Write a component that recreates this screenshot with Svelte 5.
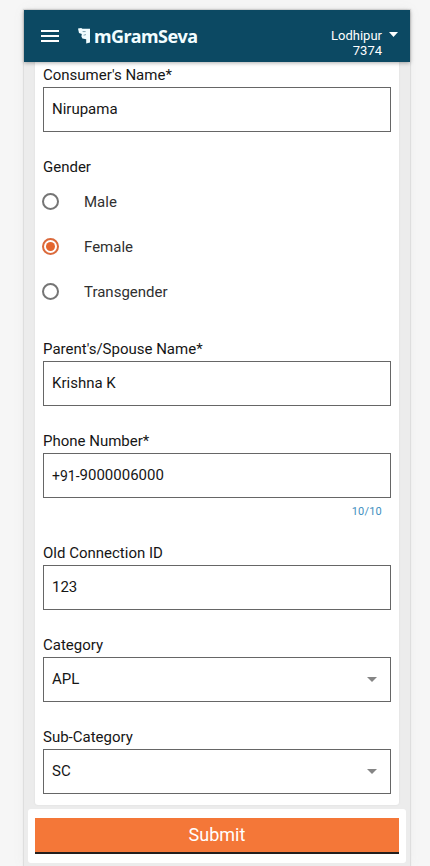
<script>
  let gender = $state('Female');
  const genders = ['Male', 'Female', 'Transgender'];
</script>

{#snippet field(label, value, select = false, prefix = '')}
  <div class="field">
    <div class="label"><span>{label}</span></div>
    <div class="box">
      <span class="value">{#if prefix}<span class="prefix">{prefix}</span>{/if}{value}</span>
      {#if select}
        <svg class="caret" width="10" height="5" viewBox="0 0 10 5"><path d="M0 0h10L5 5z" fill="#858585" /></svg>
      {/if}
    </div>
  </div>
{/snippet}

<div class="screen">
  <div class="phone">
    <header>
      <svg class="menu" width="18" height="12" viewBox="0 0 18 12"><path d="M0 0h18v2H0zM0 5h18v2H0zM0 10h18v2H0z" fill="#fff" /></svg>
      <svg class="mark" width="12" height="16" viewBox="0 0 12 16">
        <path d="M0 .6L3.2 0 4.4 .8H12V14.6L8.2 15.6V11.2L4.4 10.6 3.4 8.4 3.8 6 1 5z" fill="#f2fdff" />
        <path d="M4.6 3.6H7.6M5.6 7.2L8 6.6" stroke="#0c4963" stroke-width=".5" fill="none" />
      </svg>
      <span class="brand">mGramSeva</span>
      <div class="place">
        <span>Lodhipur</span>
        <span>7374</span>
      </div>
      <svg class="place-caret" width="9" height="5" viewBox="0 0 9 5"><path d="M0 0h9L4.5 5z" fill="#fff" /></svg>
    </header>

    <main>
      <div class="card">
        {@render field("Consumer's Name*", 'Nirupama')}
        <div class="gender">
          <div class="label"><span>Gender</span></div>
          {#each genders as g}
            <button class="option" class:on={gender === g} onclick={() => (gender = g)}>
              <span class="radio"></span><span>{g}</span>
            </button>
          {/each}
        </div>
        {@render field("Parent's/Spouse Name*", 'Krishna K')}
        {@render field('Phone Number*', '9000006000', false, '+91-')}
        <div class="counter">10/10</div>
        {@render field('Old Connection ID', '123')}
        {@render field('Category', 'APL', true)}
        {@render field('Sub-Category', 'SC', true)}
      </div>
      <footer><button class="submit">Submit</button></footer>
    </main>
  </div>
</div>

<style>
  :global(body) { margin: 0; background: #f6f6f6; }
  .screen {
    box-sizing: border-box; width: 430px; height: 866px; padding: 10px 20px 0 24px;
    overflow: hidden; background: #f6f6f6;
    font-family: Roboto, sans-serif; font-size: 15px; color: #161616;
  }
  .phone {
    width: 386px; height: 856px; background: #ececec;
    box-shadow: 0 0 1px 1px #dedede, 0 0 12px #eeeeee;
    display: flex; flex-direction: column;
  }
  header {
    position: relative; z-index: 1; height: 52px; flex: none; background: #0c4963; color: #fff;
    display: flex; align-items: flex-start; box-sizing: border-box; padding-left: 17px;
    box-shadow: 0 1px 4px rgba(0, 0, 0, .32);
  }
  svg { display: block; flex: none; }
  .menu { margin-top: 20px; }
  .mark { margin: 18px 0 0 19px; }
  .brand {
    margin: 13px 0 0 4px; font: 700 18px/26px "Noto Sans", sans-serif;
    letter-spacing: -.5px; color: #f2fdff;
  }
  .place {
    margin: 18px 7px 0 auto; display: flex; flex-direction: column; align-items: flex-end;
    font-size: 13px; line-height: 15px;
  }
  .place-caret { margin: 22px 12px 0 0; }
  main { flex: 1; display: flex; flex-direction: column; }
  .card {
    box-sizing: border-box; height: 743px; margin: 0 11px; padding: 3px 8px 0; background: #fff;
    border-radius: 0 0 3px 3px; box-shadow: 0 0 2px #d8d8d8;
  }
  .label { height: 22px; line-height: 20px; }
  .field { height: 92px; }
  .box {
    box-sizing: border-box; height: 45px; border: 1px solid #666; padding: 0 13px 2px 8px;
    display: flex; align-items: center; justify-content: space-between;
  }
  .value { line-height: 20px; }
  .prefix { font-size: 14px; position: relative; top: 1px; }
  .caret { margin-top: 2px; }
  .gender { height: 182px; }
  .option {
    display: flex; align-items: center; height: 45px; width: 100%; padding: 0; border: 0;
    background: none; font: inherit; color: #303030;
  }
  .option .radio {
    box-sizing: border-box; width: 17px; height: 17px; margin: 0 25px 0 -1px;
    border: 2px solid #757575; border-radius: 50%; display: grid; place-items: center;
  }
  .on .radio { border-color: #db6a3c; }
  .on .radio::after { content: ''; width: 9px; height: 9px; border-radius: 50%; background: #e4652e; }
  .counter {
    height: 21px; margin-top: -18px; margin-bottom: 17px; padding-right: 9px; text-align: right;
    font-size: 11px; line-height: 14px; letter-spacing: .2px; color: #3f8fc0;
  }
  footer {
    box-sizing: border-box; height: 54px; margin: 4px 4px 0; padding: 9px 7px; background: #fff;
    border-radius: 3px;
  }
  .submit {
    display: block; width: 100%; height: 36px; padding: 0; border: 0; border-bottom: 2px solid #231f1e;
    background: #f47738; color: #fff; font: 18px/34px Roboto, sans-serif;
  }
</style>
